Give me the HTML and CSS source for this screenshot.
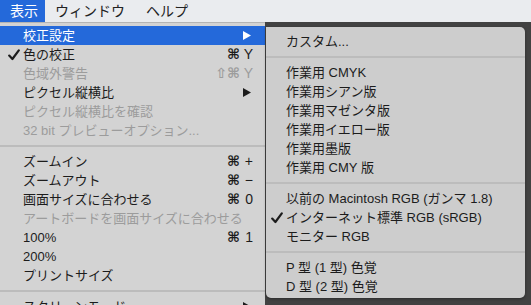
FILE: index.html
```html
<!DOCTYPE html>
<html lang="ja">
	<head>
		<meta charset="UTF-8" />
		<meta name="viewport" content="width=device-width, initial-scale=1.0" />
		<title>表示メニュー</title>
		<link rel="stylesheet" href="styles.css">
	</head>
	<body>
		<div class="menubar">
			<span class="menubar-item is-open">表示</span>
			<span class="menubar-item">ウィンドウ</span>
			<span class="menubar-item">ヘルプ</span>
		</div>

		<div class="stage">
			<!-- main dropdown -->
			<ul class="menu menu-main">
				<li class="item is-active">
					<span class="check"></span>
					<span class="label">校正設定</span>
					<svg class="arrow" width="8" height="9" viewBox="0 0 8 9"><polygon points="0,0 8,4.5 0,9" /></svg>
				</li>
				<li class="item">
					<span class="check"><svg width="12" height="12" viewBox="0 0 12 12"><path d="M1.2 6.6 L4.4 10 L10.8 1.4" /></svg></span>
					<span class="label">色の校正</span>
					<span class="shortcut">⌘<span class="key">Y</span></span>
				</li>
				<li class="item is-disabled">
					<span class="check"></span>
					<span class="label">色域外警告</span>
					<span class="shortcut">⇧⌘<span class="key">Y</span></span>
				</li>
				<li class="item">
					<span class="check"></span>
					<span class="label">ピクセル縦横比</span>
					<svg class="arrow" width="8" height="9" viewBox="0 0 8 9"><polygon points="0,0 8,4.5 0,9" /></svg>
				</li>
				<li class="item is-disabled">
					<span class="check"></span>
					<span class="label">ピクセル縦横比を確認</span>
				</li>
				<li class="item is-disabled">
					<span class="check"></span>
					<span class="label">32 bit プレビューオプション...</span>
				</li>
				<li class="sep"></li>
				<li class="item">
					<span class="check"></span>
					<span class="label">ズームイン</span>
					<span class="shortcut">⌘<span class="key">+</span></span>
				</li>
				<li class="item">
					<span class="check"></span>
					<span class="label">ズームアウト</span>
					<span class="shortcut">⌘<span class="key">−</span></span>
				</li>
				<li class="item">
					<span class="check"></span>
					<span class="label">画面サイズに合わせる</span>
					<span class="shortcut">⌘<span class="key">0</span></span>
				</li>
				<li class="item is-disabled">
					<span class="check"></span>
					<span class="label">アートボードを画面サイズに合わせる</span>
				</li>
				<li class="item">
					<span class="check"></span>
					<span class="label">100%</span>
					<span class="shortcut">⌘<span class="key">1</span></span>
				</li>
				<li class="item">
					<span class="check"></span>
					<span class="label">200%</span>
				</li>
				<li class="item">
					<span class="check"></span>
					<span class="label">プリントサイズ</span>
				</li>
				<li class="sep"></li>
				<li class="item">
					<span class="check"></span>
					<span class="label">スクリーンモード</span>
					<svg class="arrow" width="8" height="9" viewBox="0 0 8 9"><polygon points="0,0 8,4.5 0,9" /></svg>
				</li>
			</ul>

			<!-- 校正設定 submenu -->
			<ul class="menu menu-sub">
				<li class="item"><span class="check"></span><span class="label">カスタム...</span></li>
				<li class="sep"></li>
				<li class="item"><span class="check"></span><span class="label">作業用 CMYK</span></li>
				<li class="item"><span class="check"></span><span class="label">作業用シアン版</span></li>
				<li class="item"><span class="check"></span><span class="label">作業用マゼンタ版</span></li>
				<li class="item"><span class="check"></span><span class="label">作業用イエロー版</span></li>
				<li class="item"><span class="check"></span><span class="label">作業用墨版</span></li>
				<li class="item"><span class="check"></span><span class="label">作業用 CMY 版</span></li>
				<li class="sep"></li>
				<li class="item"><span class="check"></span><span class="label">以前の Macintosh RGB (ガンマ 1.8)</span></li>
				<li class="item">
					<span class="check"><svg width="12" height="12" viewBox="0 0 12 12"><path d="M1.2 6.6 L4.4 10 L10.8 1.4" /></svg></span>
					<span class="label">インターネット標準 RGB (sRGB)</span>
				</li>
				<li class="item"><span class="check"></span><span class="label">モニター RGB</span></li>
				<li class="sep"></li>
				<li class="item"><span class="check"></span><span class="label">P 型 (1 型) 色覚</span></li>
				<li class="item"><span class="check"></span><span class="label">D 型 (2 型) 色覚</span></li>
			</ul>
		</div>
	</body>
</html>
```

FILE: styles.css
```css
html, body {
	margin: 0;
	padding: 0;
	height: 305px;
	overflow: hidden;
}
body {
	font-family: "Liberation Sans", "Noto Sans CJK JP", sans-serif;
	color: #1c1c1c;
	background-color: #3b3b3b;
}
.menubar {
	display: flex;
	height: 22px;
	background-color: #eaecef;
	font-size: 14px;
	line-height: 22px;
}
.menubar-item {
	padding: 0 9px 0 9px;
	color: #222;
}
.menubar-item:first-child {
	padding-left: 10px;
	padding-right: 7px;
}
.menubar-item.is-open {
	background-color: #2469da;
	color: #fff;
}
.menubar-item + .menubar-item {
	margin-left: 1px;
	margin-right: 2px;
}
.stage {
	display: flex;
	align-items: flex-start;
	background-color: #424242;
	height: 283px;
}
.menu {
	list-style: none;
	margin: 0;
	font-size: 13px;
}
.menu-main {
	width: 265px;
	padding: 3px 0 0 0;
	border-top: 1px solid #b4b4b4;
	background-color: #d3d3d3;
}
.menu-sub {
	width: 259px;
	margin-top: 5px;
	margin-left: 1px;
	padding: 5px 0 2px 5px;
	box-sizing: border-box;
	background-color: #cdcdcd;
	border-radius: 0 5px 5px 5px;
	box-shadow: 0 1px 3px rgba(0, 0, 0, 0.35);
}
.item {
	display: flex;
	align-items: center;
	height: 19px;
	line-height: 19px;
	padding: 0 12px 0 8px;
	white-space: nowrap;
}
.menu-sub .item {
	padding-left: 0;
}
.check {
	width: 15px;
	flex: none;
	display: flex;
	align-items: center;
}
.check svg {
	fill: none;
	stroke: #1c1c1c;
	stroke-width: 2.2;
	stroke-linecap: round;
	stroke-linejoin: round;
}
.label {
	flex: 1;
}
.arrow {
	fill: #1c1c1c;
	margin-right: 2px;
}
.shortcut {
	font-family: "DejaVu Sans", sans-serif;
	font-size: 14px;
	font-weight: bold;
}
.key {
	display: inline-block;
	width: 11px;
	margin-left: 2px;
	text-align: right;
	font-family: "Liberation Sans", sans-serif;
	font-size: 14px;
	font-weight: normal;
}
.item.is-active {
	background-color: #2469da;
	color: #fff;
}
.item.is-active .arrow {
	fill: #fff;
}
.item.is-disabled {
	color: #9c9c9c;
}
.sep {
	height: 2px;
	margin: 5px 0 5px 0;
	background-color: #bcbcbc;
}
.menu-sub .sep {
	margin-left: -5px;
}
```
